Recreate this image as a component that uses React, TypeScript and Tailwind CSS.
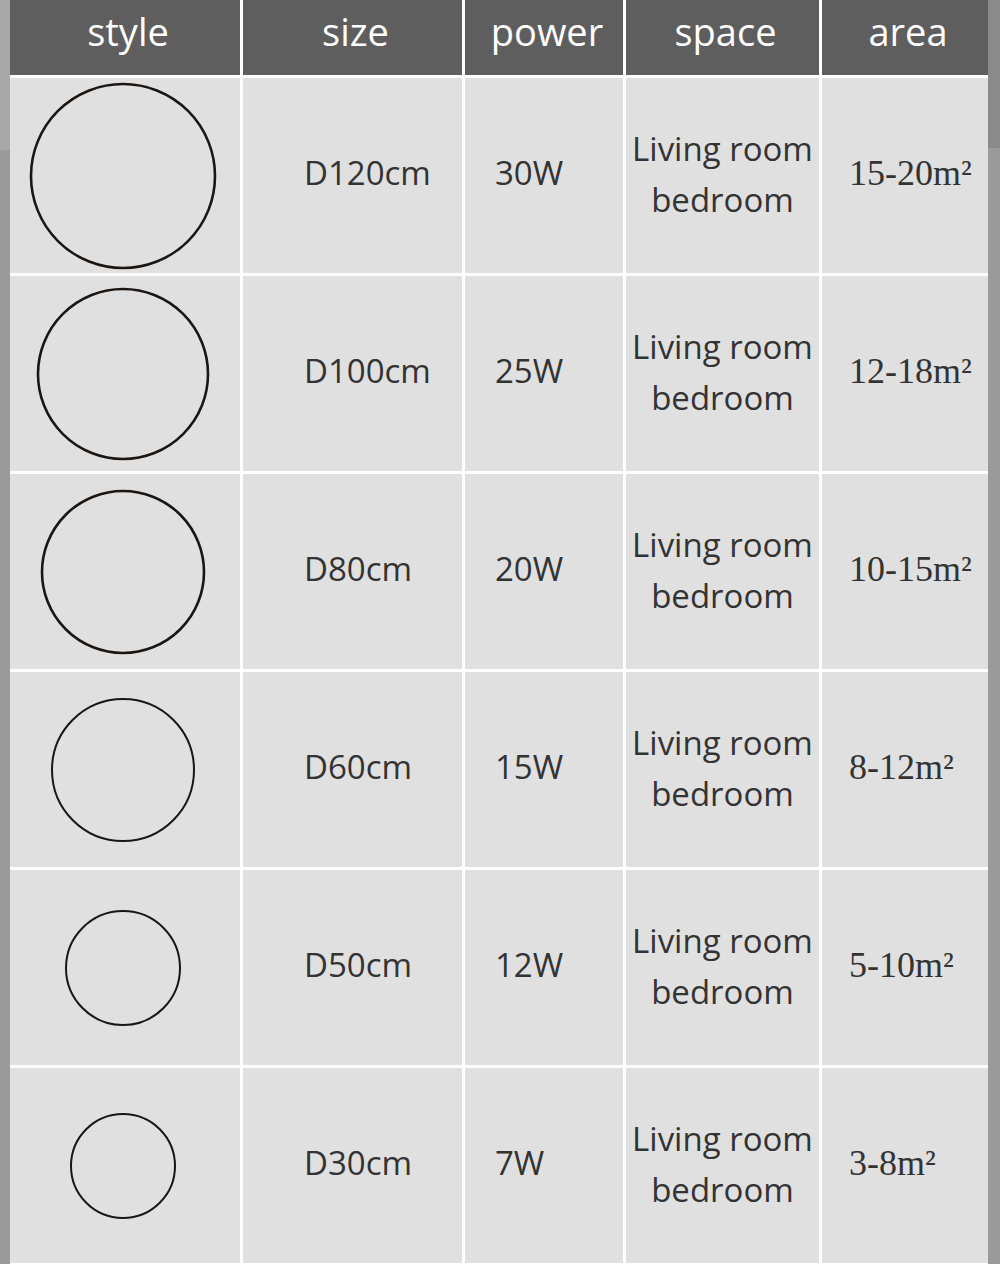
const rows = [
  { r: 92, size: "D120cm", power: "30W", area: "15-20" },
  { r: 85, size: "D100cm", power: "25W", area: "12-18" },
  { r: 81, size: "D80cm", power: "20W", area: "10-15" },
  { r: 71, size: "D60cm", power: "15W", area: "8-12" },
  { r: 57, size: "D50cm", power: "12W", area: "5-10" },
  { r: 52, size: "D30cm", power: "7W", area: "3-8" },
];

const sans = "font-['Open_Sans','Noto_Sans',sans-serif]";

function Ring({ r }: { r: number }) {
  const w = r * 2 + 6;
  return (
    <svg width={w} height={w} viewBox={`0 0 ${w} ${w}`}>
      <circle cx={w / 2} cy={w / 2} r={r} fill="none" stroke="#1c1612" strokeWidth={r > 75 ? 2.6 : 2} />
    </svg>
  );
}

export default function App() {
  return (
    <div className="w-[1000px] h-[1281px] bg-white flex items-start">
      <div className="w-[10px] h-[1264px] flex flex-col">
        <div className="h-[150px] bg-[#a8a8a8]" />
        <div className="flex-1 bg-[#9a9a9a]" />
      </div>
      <div
        className={`w-[978px] grid grid-cols-[230px_219px_158px_193px_166px] grid-rows-[75px_repeat(6,195px)] gap-x-[3px] gap-y-[3px] bg-white ${sans}`}
      >
        {["style", "size", "power", "space", "area"].map((h) => (
          <div key={h} className="bg-[#5e5e5e] text-white text-[38px] flex items-center justify-center pb-[12px] pl-[6px]">
            {h}
          </div>
        ))}
        {rows.map((row) => (
          <div key={row.size} className="contents">
            <div className="bg-[#e0e0e0] flex items-center justify-center pr-[4px]">
              <Ring r={row.r} />
            </div>
            <div className="bg-[#e0e0e0] flex items-center pl-[61px] pb-[6px] text-[33px] text-[#333]">{row.size}</div>
            <div className="bg-[#e0e0e0] flex items-center pl-[30px] pb-[6px] text-[33px] text-[#333]">{row.power}</div>
            <div className="bg-[#e0e0e0] flex flex-col items-center justify-center text-[33px] leading-[51px] text-[#333] pb-[4px]">
              <span>Living room</span>
              <span>bedroom</span>
            </div>
            <div className="bg-[#e0e0e0] flex items-center pl-[27px] pb-[6px] text-[36px] text-[#333] font-['Liberation_Serif',serif]">
              {row.area}m²
            </div>
          </div>
        ))}
      </div>
      <div className="w-[12px] h-[1264px] flex flex-col">
        <div className="h-[148px] bg-[#8a8a8a]" />
        <div className="flex-1 bg-[#9a9a9a]" />
      </div>
    </div>
  );
}
